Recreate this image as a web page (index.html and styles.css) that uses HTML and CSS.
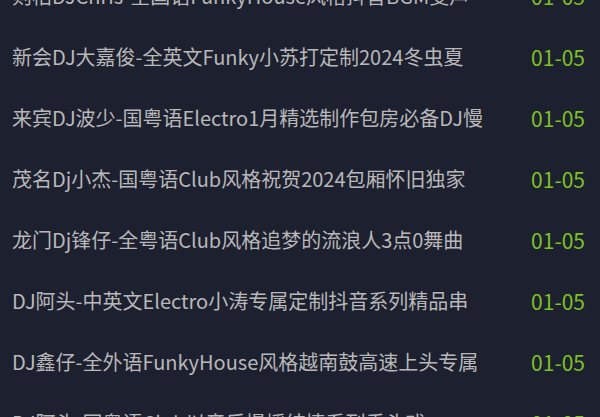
FILE: index.html
```html
<!DOCTYPE html>
<html lang="zh-CN">
<head>
<meta charset="utf-8">
<title>DJ list</title>
<link rel="stylesheet" href="styles.css">
</head>
<body>
<ul class="list">
  <li class="row"><span class="title">则柏DJChris-全国语FunkyHouse风格抖音BGM变声</span><span class="date">01-05</span></li>
  <li class="row"><span class="title">新会DJ大嘉俊-全英文Funky小苏打定制2024冬虫夏</span><span class="date">01-05</span></li>
  <li class="row"><span class="title">来宾DJ波少-国粤语Electro1月精选制作包房必备DJ慢</span><span class="date">01-05</span></li>
  <li class="row"><span class="title">茂名Dj小杰-国粤语Club风格祝贺2024包厢怀旧独家</span><span class="date">01-05</span></li>
  <li class="row"><span class="title">龙门Dj锋仔-全粤语Club风格追梦的流浪人3点0舞曲</span><span class="date">01-05</span></li>
  <li class="row"><span class="title">DJ阿头-中英文Electro小涛专属定制抖音系列精品串</span><span class="date">01-05</span></li>
  <li class="row"><span class="title">DJ鑫仔-全外语FunkyHouse风格越南鼓高速上头专属</span><span class="date">01-05</span></li>
  <li class="row"><span class="title">DJ阿头-国粤语Club以音乐慢摇纯情系列重头戏</span><span class="date">01-05</span></li>
</ul>
</body>
</html>
```
FILE: styles.css
```css
html, body {
  margin: 0;
  padding: 0;
  background: #1d202e;
  overflow: hidden;
}
.list {
  list-style: none;
  margin: -35px 0 0 0;
  padding: 0;
  font-family: "Noto Sans CJK SC", "Noto Sans", sans-serif;
  font-size: 20px;
}
.row {
  height: 61px;
  display: flex;
  align-items: center;
  justify-content: space-between;
  padding: 0 15px 0 12px;
}
.title {
  color: #b8b8ba;
  white-space: nowrap;
}
.date {
  color: #7dc224;
  font-size: 21px;
}
```
